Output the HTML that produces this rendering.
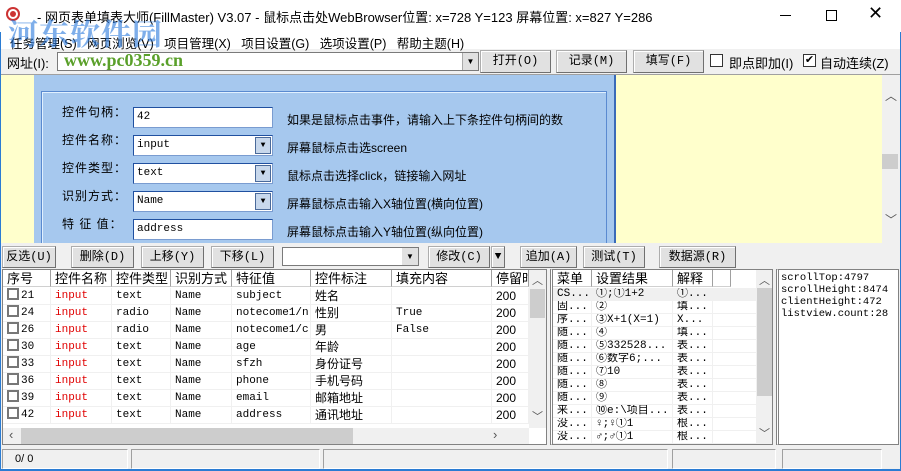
<!DOCTYPE html>
<html><head><meta charset="utf-8">
<style>
*{box-sizing:border-box;margin:0;padding:0}
body{width:901px;height:471px;overflow:hidden;background:#f0f0f0;font-family:"Liberation Sans","Noto Sans CJK SC",sans-serif;font-size:12px;color:#000;position:relative}
.a{position:absolute}
.btn{position:absolute;background:#e1e1e1;border:1px solid #adadad;border-right-color:#707070;border-bottom-color:#707070;box-shadow:inset 1px 1px 0 #fff;text-align:center;font-size:12px;line-height:20px;font-family:"Liberation Mono","Noto Sans CJK SC",monospace}
.mono{font-family:"Liberation Mono","Noto Sans CJK SC",monospace;font-size:11px}
.cb{position:absolute;width:13px;height:13px;border:1px solid #333;background:#fff}
.hd{position:absolute;top:0;height:17px;border-right:1px solid #a0a0a0;padding-left:4px;line-height:17px;font-size:13px;background:#fff;border-bottom:1px solid #d0d0d0;white-space:nowrap;overflow:hidden}
.row{position:absolute;left:0;height:17px;border-bottom:1px solid #f0f0f0;width:100%}
.c{position:absolute;top:0;height:17px;line-height:16px;border-right:1px solid #f0f0f0;padding-left:4px;white-space:nowrap;overflow:hidden}
.inp{position:absolute;background:#fff;border:1px solid #7a9cd0;border-top-color:#2050a0;border-left-color:#2050a0;height:21px;line-height:19px;padding-left:3px;font-family:"Liberation Mono",monospace;font-size:11px}
.dd{position:absolute;right:1px;top:1px;width:16px;height:17px;background:#c8d8ec;border:1px solid #4a6a9a;font-size:8px;line-height:15px;text-align:center}
.lbl{position:absolute;font-size:12px;white-space:nowrap}
.sb{position:absolute;background:#f0f0f0}
</style></head><body>
<!-- title -->
<div class="a" style="left:0;top:0;width:901px;height:32px;background:#fff"></div>
<div class="a" style="left:6px;top:7px;width:14px;height:14px;border-radius:50%;border:2px solid #c33;background:#fff"></div>
<div class="a" style="left:10px;top:11px;width:6px;height:6px;border-radius:50%;background:#c33"></div>
<div class="a" style="left:37px;top:7px;font-size:13px;white-space:nowrap">- 网页表单填表大师(FillMaster) V3.07 - 鼠标点击处WebBrowser位置: x=728 Y=123 屏幕位置: x=827 Y=286</div>
<div class="a" style="left:780px;top:15px;width:11px;height:1px;background:#000"></div>
<div class="a" style="left:826px;top:10px;width:11px;height:11px;border:1px solid #000"></div>
<div class="a" style="left:868px;top:3px;font-size:18px;font-weight:300">✕</div>
<!-- menu -->
<div class="a" style="left:0;top:32px;width:901px;height:17px;background:#fff"></div>
<div class="a" style="left:10px;top:33px;font-size:12.5px;white-space:nowrap">任务管理(S)&nbsp;&nbsp;&nbsp;网页浏览(V)&nbsp;&nbsp;&nbsp;项目管理(X)&nbsp;&nbsp;&nbsp;项目设置(G)&nbsp;&nbsp;&nbsp;选项设置(P)&nbsp;&nbsp;&nbsp;帮助主题(H)</div>
<div class="a" style="left:8px;top:10px;font-size:30px;font-weight:bold;color:rgba(40,120,220,.6);letter-spacing:1px;font-family:'Noto Serif CJK SC',serif;z-index:5;white-space:nowrap">河东软件园</div>
<!-- toolbar -->
<div class="a" style="left:7px;top:53px;font-size:13px">网址(I):</div>
<div class="a" style="left:57px;top:52px;width:422px;height:19px;background:#fff;border:1px solid #7a7a7a"></div>
<div class="a" style="left:462px;top:53px;width:16px;height:17px;background:#e1e1e1;border-left:1px solid #aaa;font-size:8px;text-align:center;line-height:17px">▼</div>
<div class="a" style="left:64px;top:50px;font-size:18px;font-weight:bold;color:#5aa02a;font-family:'Liberation Serif',serif">www.pc0359.cn</div>
<div class="btn" style="left:480px;top:50px;width:71px;height:23px">打开(O)</div>
<div class="btn" style="left:556px;top:50px;width:71px;height:23px">记录(M)</div>
<div class="btn" style="left:633px;top:50px;width:71px;height:23px">填写(F)</div>
<div class="cb" style="left:710px;top:54px"></div>
<div class="a" style="left:729px;top:53px;font-size:13px">即点即加(I)</div>
<div class="cb" style="left:803px;top:54px;font-size:11px;line-height:11px;text-align:center">✔</div>
<div class="a" style="left:820px;top:53px;font-size:13px">自动连续(Z)</div>
<div class="a" style="left:0;top:74px;width:901px;height:1px;background:#a0a0a0"></div>
<!-- upper area -->
<div class="a" style="left:0;top:75px;width:34px;height:168px;background:#ffffcc"></div>
<div class="a" style="left:34px;top:75px;width:582px;height:168px;background:#a6c8ee;border-right:2px solid #3a6ab8"></div>
<div class="a" style="left:41px;top:91px;width:566px;height:152px;border:1px solid #5a8ad0;border-bottom:none;box-shadow:inset 1px 1px 0 #e0f0ff"></div>
<div class="lbl" style="left:62px;top:103px;letter-spacing:1px">控件句柄：</div>
<div class="lbl" style="left:62px;top:131px;letter-spacing:1px">控件名称：</div>
<div class="lbl" style="left:62px;top:159px;letter-spacing:1px">控件类型：</div>
<div class="lbl" style="left:62px;top:187px;letter-spacing:1px">识别方式：</div>
<div class="lbl" style="left:62px;top:215px;letter-spacing:1px">特&nbsp;征&nbsp;值：</div>
<div class="inp" style="left:133px;top:107px;width:140px">42</div>
<div class="inp" style="left:133px;top:135px;width:140px">input<div class="dd">▼</div></div>
<div class="inp" style="left:133px;top:163px;width:140px">text<div class="dd">▼</div></div>
<div class="inp" style="left:133px;top:191px;width:140px">Name<div class="dd">▼</div></div>
<div class="inp" style="left:133px;top:219px;width:140px">address</div>
<div class="lbl" style="left:287px;top:111px">如果是鼠标点击事件，请输入上下条控件句柄间的数</div>
<div class="lbl" style="left:287px;top:139px">屏幕鼠标点击选screen</div>
<div class="lbl" style="left:287px;top:167px">鼠标点击选择click，链接输入网址</div>
<div class="lbl" style="left:287px;top:195px">屏幕鼠标点击输入X轴位置(横向位置)</div>
<div class="lbl" style="left:287px;top:223px">屏幕鼠标点击输入Y轴位置(纵向位置)</div>
<div class="a" style="left:616px;top:75px;width:266px;height:168px;background:#ffffcc"></div>
<div class="sb" style="left:882px;top:75px;width:17px;height:168px"></div>
<div class="a" style="left:885px;top:87px;font-size:12px;color:#555">︿</div>
<div class="a" style="left:882px;top:154px;width:16px;height:15px;background:#cdcdcd"></div>
<div class="a" style="left:885px;top:211px;font-size:12px;color:#555">﹀</div>
<!-- button row -->
<div class="btn" style="left:2px;top:246px;width:54px;height:22px">反选(U)</div>
<div class="btn" style="left:71px;top:246px;width:63px;height:22px">删除(D)</div>
<div class="btn" style="left:141px;top:246px;width:63px;height:22px">上移(Y)</div>
<div class="btn" style="left:211px;top:246px;width:63px;height:22px">下移(L)</div>
<div class="a" style="left:282px;top:247px;width:137px;height:19px;background:#fff;border:1px solid #7a7a7a"></div>
<div class="a" style="left:402px;top:248px;width:16px;height:17px;background:#e1e1e1;font-size:8px;text-align:center;line-height:17px">▼</div>
<div class="btn" style="left:428px;top:246px;width:62px;height:22px">修改(C)</div>
<div class="btn" style="left:491px;top:246px;width:14px;height:22px;font-size:11px">▼</div>
<div class="btn" style="left:520px;top:246px;width:57px;height:22px">追加(A)</div>
<div class="btn" style="left:583px;top:246px;width:62px;height:22px">测试(T)</div>
<div class="btn" style="left:659px;top:246px;width:77px;height:22px">数据源(R)</div>
<!-- left list -->
<div class="a" style="left:2px;top:269px;width:545px;height:176px;background:#fff;border:1px solid #828282;overflow:hidden">
 <div class="hd" style="left:0;width:48px">序号</div>
 <div class="hd" style="left:48px;width:61px">控件名称</div>
 <div class="hd" style="left:109px;width:59px">控件类型</div>
 <div class="hd" style="left:168px;width:61px">识别方式</div>
 <div class="hd" style="left:229px;width:79px">特征值</div>
 <div class="hd" style="left:308px;width:81px">控件标注</div>
 <div class="hd" style="left:389px;width:100px">填充内容</div>
 <div class="hd" style="left:489px;width:37px">停留时</div>
 <div id="rows" class="a" style="left:0;top:18px;width:526px"></div>
 <div class="sb" style="left:526px;top:0;width:17px;height:158px"></div>
 <div class="a" style="left:529px;top:2px;font-size:11px;color:#555">︿</div>
 <div class="a" style="left:527px;top:19px;width:15px;height:29px;background:#cdcdcd"></div>
 <div class="a" style="left:529px;top:138px;font-size:11px;color:#555">﹀</div>
 <div class="sb" style="left:0;top:158px;width:526px;height:17px"></div>
 <div class="a" style="left:6px;top:157px;font-size:13px;color:#555">‹</div>
 <div class="a" style="left:18px;top:158px;width:332px;height:16px;background:#cdcdcd"></div>
 <div class="a" style="left:490px;top:157px;font-size:13px;color:#555">›</div>
</div>
<!-- mid list -->
<div class="a" style="left:550px;top:269px;width:223px;height:176px;background:#fff;border:1px solid #828282;border-left:3px double #828282;overflow:hidden">
 <div class="hd" style="left:0;width:39px">菜单</div>
 <div class="hd" style="left:39px;width:81px">设置结果</div>
 <div class="hd" style="left:120px;width:40px">解释</div>
 <div class="hd" style="left:160px;width:18px"></div>
 <div id="rows2" class="a" style="left:0;top:18px;width:203px"></div>
 <div class="sb" style="left:203px;top:0;width:17px;height:176px"></div>
 <div class="a" style="left:206px;top:2px;font-size:11px;color:#555">︿</div>
 <div class="a" style="left:204px;top:18px;width:15px;height:108px;background:#cdcdcd"></div>
 <div class="a" style="left:206px;top:155px;font-size:11px;color:#555">﹀</div>
</div>
<!-- right text -->
<div class="a mono" style="left:776px;top:269px;width:123px;height:176px;background:#fff;border:1px solid #828282;border-left:3px double #828282;padding:2px 0 0 2px;line-height:12px;font-size:10.5px">scrollTop:4797<br>scrollHeight:8474<br>clientHeight:472<br>listview.count:28</div>
<!-- status -->
<div class="a" style="left:2px;top:449px;width:126px;height:20px;border:1px solid #a0a0a0;border-right-color:#fff;border-bottom-color:#fff;padding-left:12px;line-height:18px;font-size:11px">0/ 0</div>
<div class="a" style="left:131px;top:449px;width:189px;height:20px;border:1px solid #a0a0a0;border-right-color:#fff;border-bottom-color:#fff"></div>
<div class="a" style="left:323px;top:449px;width:345px;height:20px;border:1px solid #a0a0a0;border-right-color:#fff;border-bottom-color:#fff"></div>
<div class="a" style="left:672px;top:449px;width:104px;height:20px;border:1px solid #a0a0a0;border-right-color:#fff;border-bottom-color:#fff"></div>
<div class="a" style="left:782px;top:449px;width:100px;height:20px;border:1px solid #a0a0a0;border-right-color:#fff;border-bottom-color:#fff"></div>
<div class="a" style="left:0;top:469px;width:901px;height:2px;background:#2b7cd3"></div>
<div class="a" style="left:0;top:32px;width:1px;height:439px;background:#2b7cd3"></div>
<div class="a" style="left:900px;top:32px;width:1px;height:439px;background:#2b7cd3"></div>
<script>
var d=[["21","text","subject","姓名",""],["24","radio","notecome1/n","性别","True"],["26","radio","notecome1/c","男","False"],["30","text","age","年龄",""],["33","text","sfzh","身份证号",""],["36","text","phone","手机号码",""],["39","text","email","邮箱地址",""],["42","text","address","通讯地址",""]];
var h="";d.forEach(function(r,i){h+='<div class="row mono" style="top:'+(i*17)+'px">'+
'<div class="c" style="left:0;width:48px"><span style="display:inline-block;width:12px;height:12px;border:2px solid #777;vertical-align:-2px;margin-right:2px"></span>'+r[0]+'</div>'+
'<div class="c" style="left:48px;width:61px;color:#e00000">input</div>'+
'<div class="c" style="left:109px;width:59px">'+r[1]+'</div>'+
'<div class="c" style="left:168px;width:61px">Name</div>'+
'<div class="c" style="left:229px;width:79px">'+r[2]+'</div>'+
'<div class="c" style="left:308px;width:81px;font-family:\'Noto Sans CJK SC\',sans-serif;font-size:12px;line-height:15px">'+r[3]+'</div>'+
'<div class="c" style="left:389px;width:100px">'+r[4]+'</div>'+
'<div class="c" style="left:489px;width:37px;font-family:\'Liberation Sans\',sans-serif;font-size:12px">200</div></div>';});
document.getElementById("rows").innerHTML=h;
var e=[["CS...","①;①1+2","①..."],["固...","②","填..."],["序...","③X+1(X=1)","X..."],["随...","④","填..."],["随...","⑤332528...","表..."],["随...","⑥数字6;...","表..."],["随...","⑦10","表..."],["随...","⑧","表..."],["随...","⑨","表..."],["来...","⑩e:\\项目...","表..."],["没...","♀;♀①1","根..."],["没...","♂;♂①1","根..."]];
h="";e.forEach(function(r,i){h+='<div class="row mono" style="top:'+(i*13)+'px;height:13px;'+(i==0?'background:#f0f0f0':'')+'">'+
'<div class="c" style="left:0;width:39px;height:13px;line-height:13px">'+r[0]+'</div>'+
'<div class="c" style="left:39px;width:81px;height:13px;line-height:13px">'+r[1]+'</div>'+
'<div class="c" style="left:120px;width:40px;height:13px;line-height:13px">'+r[2]+'</div></div>';});
document.getElementById("rows2").innerHTML=h;
</script>
</body></html>
